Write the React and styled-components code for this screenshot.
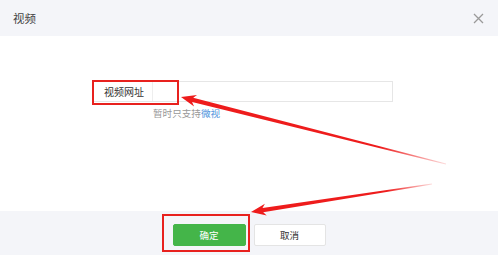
import React from "react";
import styled, { createGlobalStyle } from "styled-components";

const Global = createGlobalStyle`
  html, body { margin: 0; padding: 0; background: #fff; }
  body { font-family: "Noto Sans CJK SC", "Noto Sans", sans-serif; }
`;

const Dialog = styled.div`
  position: relative;
  width: 498px;
  height: 255px;
  display: flex;
  flex-direction: column;
  background: #fff;
  overflow: hidden;
`;

const Header = styled.div`
  height: 36px;
  flex: none;
  background: #f4f5f9;
  display: flex;
  align-items: center;
  justify-content: space-between;
  padding: 0 14px 0 13px;
`;

const Title = styled.span`
  font-size: 11.5px;
  color: #444;
`;

const Close = styled.svg`
  width: 11px;
  height: 11px;
  display: block;
`;

const Body = styled.div`
  flex: 1;
  padding: 45px 0 0 93px;
  display: flex;
  flex-direction: column;
`;

const Field = styled.div`
  width: 300px;
  height: 21px;
  border: 1px solid #e6e6e6;
  box-sizing: border-box;
  display: flex;
  align-items: stretch;
`;

const Label = styled.div`
  width: 59px;
  border-right: 1px solid #eeeeee;
  display: flex;
  align-items: center;
  padding-left: 10px;
  box-sizing: border-box;
  font-size: 10px;
  color: #333;
`;

const Input = styled.div`
  flex: 1;
`;

const Hint = styled.div`
  margin: 4px 0 0 60px;
  font-size: 9.6px;
  color: #999;
  line-height: 14px;
`;

const Link = styled.span`
  color: #4f94dc;
`;

const Footer = styled.div`
  height: 44px;
  flex: none;
  background: #f4f5f9;
  display: flex;
  justify-content: center;
  align-items: flex-start;
  gap: 8px;
  padding-top: 13px;
  box-sizing: border-box;
`;

const Button = styled.button`
  width: ${(p) => (p.$primary ? 73 : 72)}px;
  height: 22px;
  border-radius: 2px;
  border: 1px solid ${(p) => (p.$primary ? "#44b549" : "#e4e4e4")};
  background: ${(p) => (p.$primary ? "#44b549" : "#fff")};
  color: ${(p) => (p.$primary ? "#fff" : "#333")};
  font-family: inherit;
  font-size: 9.5px;
  padding: 0;
  display: flex;
  align-items: center;
  justify-content: center;
`;

const RedBox = styled.div`
  position: absolute;
  left: ${(p) => p.$x}px;
  top: ${(p) => p.$y}px;
  width: ${(p) => p.$w}px;
  height: ${(p) => p.$h}px;
  border: 2px solid #e8211e;
  box-sizing: border-box;
  pointer-events: none;
`;

const Overlay = styled.svg`
  position: absolute;
  left: 0;
  top: 0;
  width: 498px;
  height: 255px;
  pointer-events: none;
`;

function arrowPoints(tip, tail, headLen = 15, headHalf = 6, shaftHalf = 2.2, tailHalf = 0.4) {
  const dx = tail[0] - tip[0];
  const dy = tail[1] - tip[1];
  const len = Math.hypot(dx, dy);
  const ux = dx / len, uy = dy / len;
  const nx = -uy, ny = ux;
  const p = (d, w) => [tip[0] + ux * d + nx * w, tip[1] + uy * d + ny * w];
  const pts = [
    tip,
    p(headLen, headHalf),
    p(headLen - 3, shaftHalf),
    p(len, tailHalf),
    p(len, -tailHalf),
    p(headLen - 3, -shaftHalf),
    p(headLen, -headHalf),
  ];
  return pts.map((q) => q.map((v) => v.toFixed(1)).join(",")).join(" ");
}

function Arrow({ tip, tail, id }) {
  return (
    <>
      <defs>
        <linearGradient id={id} gradientUnits="userSpaceOnUse" x1={tip[0]} y1={tip[1]} x2={tail[0]} y2={tail[1]}>
          <stop offset="0" stopColor="#ee1c1c" />
          <stop offset="0.75" stopColor="#ee1c1c" />
          <stop offset="1" stopColor="#ee1c1c" stopOpacity="0.15" />
        </linearGradient>
      </defs>
      <polygon points={arrowPoints(tip, tail)} fill={`url(#${id})`} />
    </>
  );
}

export default function App() {
  return (
    <>
      <Global />
      <Dialog>
        <Header>
          <Title>视频</Title>
          <Close viewBox="0 0 11 11">
            <path d="M1 1L10 10M10 1L1 10" stroke="#9a9a9a" strokeWidth="1.3" fill="none" />
          </Close>
        </Header>
        <Body>
          <Field>
            <Label>视频网址</Label>
            <Input />
          </Field>
          <Hint>
            暂时只支持<Link>微视</Link>
          </Hint>
        </Body>
        <Footer>
          <Button $primary>确定</Button>
          <Button>取消</Button>
        </Footer>
        <RedBox $x={92} $y={80} $w={87} $h={25} />
        <RedBox $x={162} $y={214} $w={88} $h={38} />
        <Overlay viewBox="0 0 498 255">
          <Arrow id="a1" tip={[181, 97]} tail={[446, 164]} />
          <Arrow id="a2" tip={[251, 212]} tail={[432, 184]} />
        </Overlay>
      </Dialog>
    </>
  );
}
